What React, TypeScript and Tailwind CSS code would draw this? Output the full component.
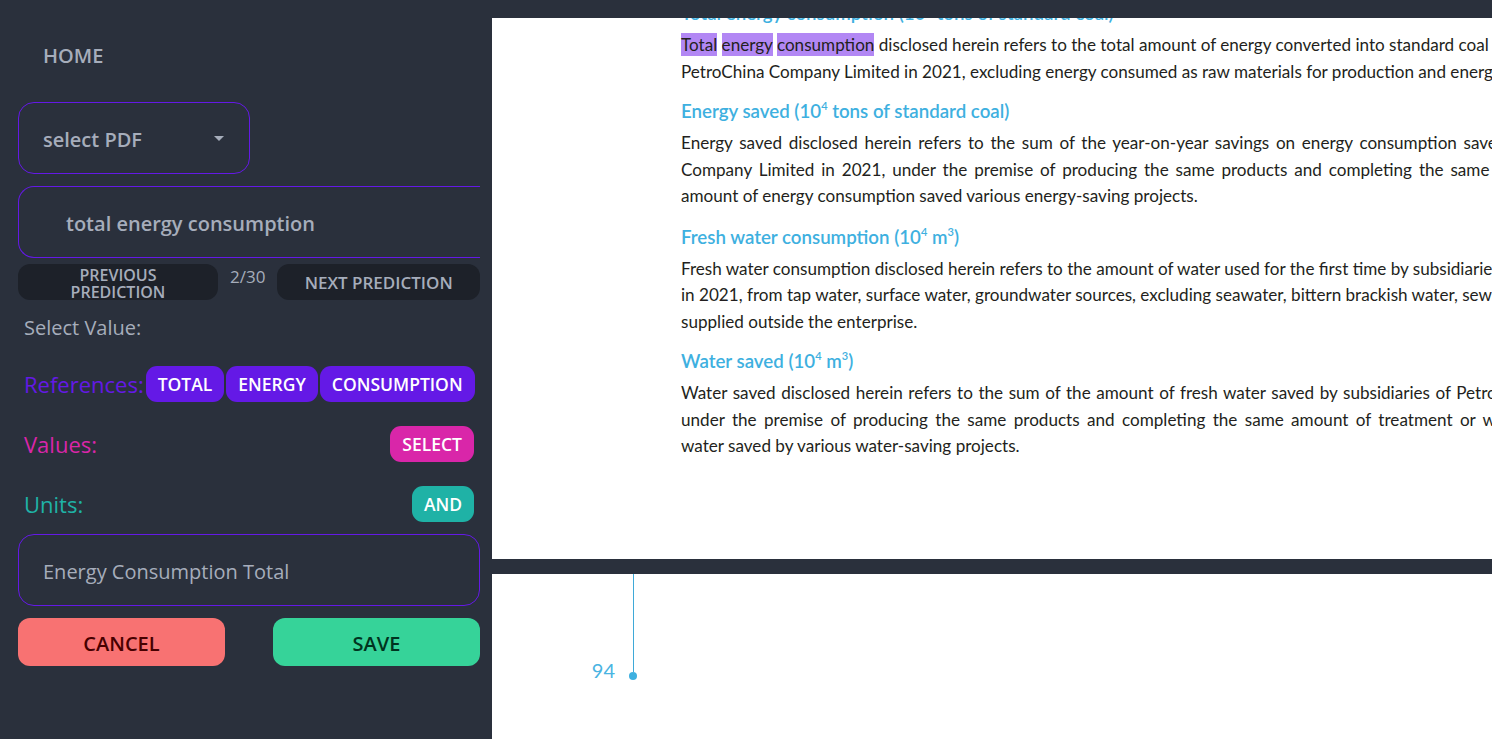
import { ReactNode } from "react"

const ui = { fontFamily: '"Open Sans", "Noto Sans", sans-serif' }
const pdf = { fontFamily: 'Lato, "Open Sans", sans-serif' }

function Heading({ children, className = "" }: { children: ReactNode; className?: string }) {
  return (
    <div className={`whitespace-nowrap text-[18.7px] leading-[28px] font-semibold text-[#3eb0e0] ${className}`}>
      {children}
    </div>
  )
}

function Line({ children, ws = 0 }: { children: ReactNode; ws?: number }) {
  return (
    <div className="whitespace-nowrap text-[17.1px] leading-[26.5px] text-[#231f20]" style={{ wordSpacing: ws }}>
      {children}
    </div>
  )
}

function Mark({ children }: { children: ReactNode }) {
  return <span className="bg-[#b287f4] py-[1px]">{children}</span>
}

function Sup({ children }: { children: ReactNode }) {
  return <sup className="-top-[0.7em] text-[11px]">{children}</sup>
}

function Chip({ children, className }: { children: ReactNode; className: string }) {
  return (
    <span className={`inline-flex h-[36px] items-center rounded-[11px] px-[12px] pt-[1px] text-[17.5px] font-semibold text-white ${className}`}>
      {children}
    </span>
  )
}

function Sidebar() {
  return (
    <aside className="flex h-full w-[492px] shrink-0 flex-col bg-[#2a303c] pl-[18px] text-[#a6adbb]" style={ui}>
      <div className="pl-[25px] pt-[42px] text-[20px] leading-[28px] font-semibold">HOME</div>

      <div className="mt-[32px] flex h-[72px] w-[232px] items-center justify-between rounded-2xl border border-[#6419e6] pl-[24px] pr-[25px] pt-[3px]">
        <span className="text-[20px] font-semibold">select PDF</span>
        <span className="mb-[2px] h-0 w-0 border-x-[5px] border-t-[5px] border-x-transparent border-t-[#a6adbb]" />
      </div>

      <div className="mt-[12px] flex h-[72px] w-[462px] items-center rounded-l-2xl border border-r-0 border-[#6419e6] pl-[47px] pt-[3px]">
        <span className="text-[20px] font-semibold">total energy consumption</span>
      </div>

      <div className="mt-[6px] flex w-[462px] items-start gap-[12px]">
        <button className="flex h-[36px] w-[200px] flex-col items-center justify-center rounded-xl bg-[#1d2129] pt-[3px] text-[16px] leading-[17px] font-semibold">
          <span>PREVIOUS</span>
          <span>PREDICTION</span>
        </button>
        <span className="pt-[1px] text-[17px] leading-[24px]">2/30</span>
        <button className="flex h-[36px] flex-1 items-center justify-center rounded-xl bg-[#1d2129] pt-[1px] text-[17px] font-semibold">
          NEXT PREDICTION
        </button>
      </div>

      <div className="mt-[14px] pl-[6px] text-[20px] leading-[28px]">Select Value:</div>

      <div className="mt-[24px] flex w-[456px] items-center gap-[2px] pl-[6px]">
        <span className="text-[22px] text-[#6419e6]">References:</span>
        <Chip className="bg-[#6419e6]">TOTAL</Chip>
        <Chip className="bg-[#6419e6]">ENERGY</Chip>
        <Chip className="bg-[#6419e6]">CONSUMPTION</Chip>
      </div>

      <div className="mt-[24px] flex w-[456px] items-center justify-between pl-[6px]">
        <span className="text-[22px] text-[#d926a9]">Values:</span>
        <Chip className="bg-[#d926a9]">SELECT</Chip>
      </div>

      <div className="mt-[24px] flex w-[456px] items-center justify-between pl-[6px]">
        <span className="text-[22px] text-[#1fb2a6]">Units:</span>
        <Chip className="bg-[#1fb2a6]">AND</Chip>
      </div>

      <div className="mt-[12px] flex h-[72px] w-[462px] items-center rounded-2xl border border-[#6419e6] pl-[24px] pt-[4px]">
        <span className="text-[20px]">Energy Consumption Total</span>
      </div>

      <div className="mt-[12px] flex w-[462px] justify-between">
        <button className="h-[48px] w-[207px] rounded-xl bg-[#f87272] pt-[3px] text-[20px] font-semibold text-[#470000]">CANCEL</button>
        <button className="h-[48px] w-[207px] rounded-xl bg-[#36d399] pt-[3px] text-[20px] font-semibold text-[#003320]">SAVE</button>
      </div>
    </aside>
  )
}

function Viewer() {
  return (
    <main className="flex h-full flex-1 flex-col overflow-hidden bg-[#2a303c]" style={pdf}>
      <div className="h-[18px] shrink-0" />
      <section className="h-[541px] shrink-0 overflow-hidden bg-white pl-[189px]">
        <Heading className="-mt-[19px]">
          Total energy consumption (10<Sup>4</Sup> tons of standard coal)
        </Heading>
        <div className="mt-[5px]">
          <Line>
            <Mark>Total</Mark> <Mark>energy</Mark> <Mark>consumption</Mark> disclosed herein refers to the total amount of energy converted into standard coal  consumed by subsidiaries of
          </Line>
          <Line>PetroChina Company Limited in 2021, excluding energy consumed as raw materials for production and energy consumed</Line>
        </div>

        <Heading className="mt-[12px]">
          Energy saved (10<Sup>4</Sup> tons of standard coal)
        </Heading>
        <div className="mt-[5px]">
          <Line ws={2.3}>Energy saved disclosed herein refers to the sum of the year-on-year savings on energy consumption saved by subsidiaries of PetroChina</Line>
          <Line ws={2.5}>Company Limited in 2021, under the premise of producing the same products and completing the same production volume</Line>
          <Line>amount of energy consumption saved various energy-saving projects.</Line>
        </div>

        <Heading className="mt-[13px]">
          Fresh water consumption (10<Sup>4</Sup> m<Sup>3</Sup>)
        </Heading>
        <div className="mt-[5px]">
          <Line>Fresh water consumption disclosed herein refers to the amount of water used for the first time by subsidiaries of PetroChina</Line>
          <Line>in 2021, from tap water, surface water, groundwater sources, excluding seawater, bittern brackish water, sewage water</Line>
          <Line>supplied outside the enterprise.</Line>
        </div>

        <Heading className="mt-[12px]">
          Water saved (10<Sup>4</Sup> m<Sup>3</Sup>)
        </Heading>
        <div className="mt-[5px]">
          <Line ws={1.2}>Water saved disclosed herein refers to the sum of the amount of fresh water saved by subsidiaries of PetroChina</Line>
          <Line ws={3}>under the premise of producing the same products and completing the same amount of treatment or work</Line>
          <Line>water saved by various water-saving projects.</Line>
        </div>
      </section>
      <div className="h-[15px] shrink-0" />
      <section className="flex-1 bg-white">
        <div className="ml-[99px] flex items-start">
          <div className="mr-[14px] mt-[84px] w-[24px] text-right text-[20px] leading-[24px] text-[#4ab4e2]">94</div>
          <div className="flex flex-col items-center">
            <div className="h-[98px] w-px bg-[#3fa9d8]" />
            <div className="h-[8px] w-[8px] rounded-full bg-[#3eb0e0]" />
          </div>
        </div>
      </section>
    </main>
  )
}

export default function App() {
  return (
    <div className="flex h-[739px] w-[1492px] overflow-hidden">
      <Sidebar />
      <Viewer />
    </div>
  )
}
